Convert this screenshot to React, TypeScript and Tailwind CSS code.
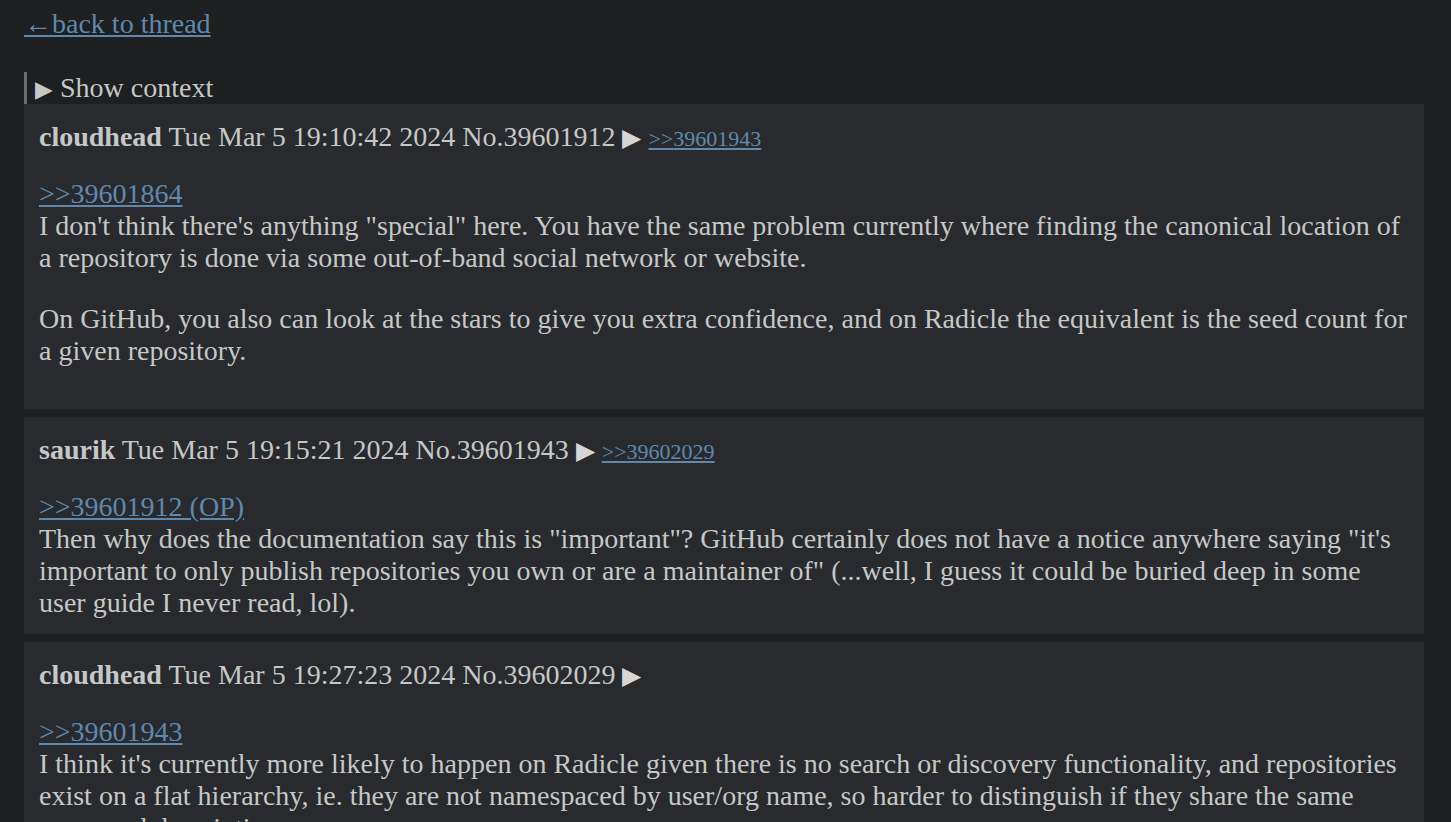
const FONT = "font-['Liberation_Serif','Times_New_Roman',serif]";

type Post = {
  author: string;
  date: string;
  no: string;
  replies: string[];
  quote: string;
  paragraphs: string[];
  trailing?: boolean;
};

const posts: Post[] = [
  {
    author: "cloudhead",
    date: "Tue Mar 5 19:10:42 2024",
    no: "39601912",
    replies: ["39601943"],
    quote: ">>39601864",
    paragraphs: [
      "I don't think there's anything \"special\" here. You have the same problem currently where finding the canonical location of a repository is done via some out-of-band social network or website.",
      "On GitHub, you also can look at the stars to give you extra confidence, and on Radicle the equivalent is the seed count for a given repository.",
    ],
    trailing: true,
  },
  {
    author: "saurik",
    date: "Tue Mar 5 19:15:21 2024",
    no: "39601943",
    replies: ["39602029"],
    quote: ">>39601912 (OP)",
    paragraphs: [
      "Then why does the documentation say this is \"important\"? GitHub certainly does not have a notice anywhere saying \"it's important to only publish repositories you own or are a maintainer of\" (...well, I guess it could be buried deep in some user guide I never read, lol).",
    ],
  },
  {
    author: "cloudhead",
    date: "Tue Mar 5 19:27:23 2024",
    no: "39602029",
    replies: [],
    quote: ">>39601943",
    paragraphs: [
      "I think it's currently more likely to happen on Radicle given there is no search or discovery functionality, and repositories exist on a flat hierarchy, ie. they are not namespaced by user/org name, so harder to distinguish if they share the same name and description.",
    ],
  },
];

function PostCard({ post }: { post: Post }) {
  return (
    <article className={`bg-[#282a2e] px-[15px] pt-[17px] ${post.trailing ? "pb-[42px]" : "pb-[15px]"}`}>
      <div className="h-8 leading-8">
        <span className="font-bold">{post.author}</span> {post.date} No.{post.no}{" "}
        <span className="text-[25px] leading-none text-[#d6d6d6]">▶</span>
        {post.replies.map((r) => (
          <span key={r}>
            {" "}
            <a href="#" className="text-[22px] leading-none text-[#5f89ac] underline">
              &gt;&gt;{r}
            </a>
          </span>
        ))}
      </div>
      <div className="mt-[25px] leading-8">
        <a href="#" className="text-[#5f89ac] underline">
          {post.quote}
        </a>
      </div>
      {post.paragraphs.map((p, i) => (
        <p key={i} className={`leading-8 ${i > 0 ? "mt-[29px]" : ""}`}>
          {p}
        </p>
      ))}
    </article>
  );
}

export default function App() {
  return (
    <div className={`min-h-screen bg-[#1d1f21] text-[#c5c8c6] text-[28px] ${FONT} pl-6 pr-[27px]`}>
      <div className="pt-2 leading-8">
        <a href="#" className="text-[#5f89ac] underline">
          ←back to thread
        </a>
      </div>
      <div className="mt-8 flex flex-col">
        <div className="h-8 border-l-[3px] border-[#6b6d70] pl-2 leading-8">
          <span className="text-[23px] leading-none">▶</span> Show context
        </div>
        <div className="flex flex-col gap-2">
          {posts.map((p) => (
            <PostCard key={p.no} post={p} />
          ))}
        </div>
      </div>
    </div>
  );
}
